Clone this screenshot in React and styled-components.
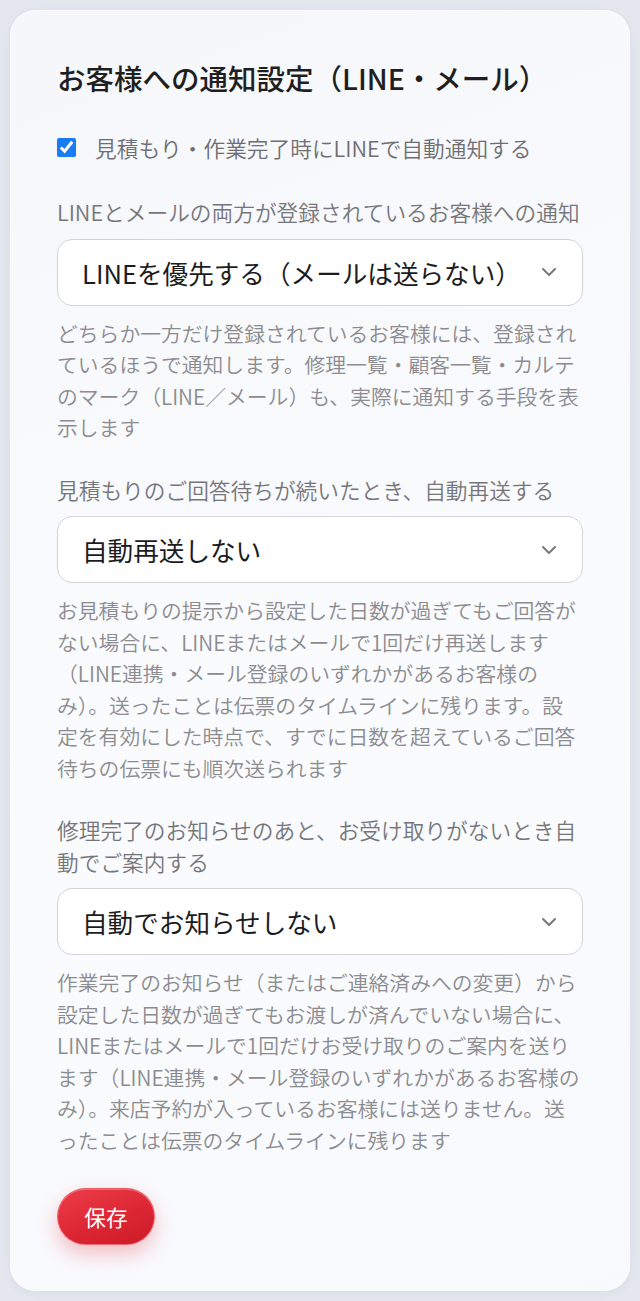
import React from 'react';
import styled, { createGlobalStyle } from 'styled-components';

const GlobalStyle = createGlobalStyle`
  html,
  body {
    margin: 0;
    padding: 0;
    background: #e4e7ee;
  }

  body {
    font-family: "Noto Sans CJK JP", "Noto Sans", sans-serif;
    -webkit-font-smoothing: antialiased;
  }
`;

const Page = styled.div`
  padding: 10px;
`;

const Card = styled.section`
  background: linear-gradient(160deg, #f6f7fa 0%, #fafbfd 55%, #f8f9fc 100%);
  border-radius: 26px;
  box-shadow: 0 2px 10px rgba(90, 100, 130, 0.08), 0 0 0 1px rgba(255, 255, 255, 0.6) inset;
  box-sizing: border-box;
  padding: 48px 47px 46px;
`;

const Title = styled.h2`
  color: #1f1f22;
  font-size: 28.5px;
  font-weight: 500;
  line-height: 39px;
  margin: 0 0 35px;
`;

const CheckRow = styled.label`
  align-items: center;
  color: #6e6e72;
  display: flex;
  font-size: 21.7px;
  font-weight: 350;
  gap: 19px;
  line-height: 31px;
  margin-bottom: 33px;

  input {
    accent-color: #1a7cf5;
    height: 19px;
    margin: 0;
    width: 19px;
  }
`;

const Field = styled.div`
  display: flex;
  flex-direction: column;

  & + & {
    margin-top: 30px;
  }
`;

const Label = styled.div`
  color: #76767a;
  font-size: 21.7px;
  font-weight: 350;
  line-height: 31.5px;
  margin-bottom: 11px;
`;

const SelectWrap = styled.div`
  position: relative;

  svg {
    pointer-events: none;
    position: absolute;
    right: 26px;
    top: 50%;
    transform: translateY(-50%);
  }
`;

const Select = styled.select`
  appearance: none;
  background: #ffffff;
  border: 1px solid #d3d3d8;
  border-radius: 15px;
  box-sizing: border-box;
  color: #1c1c1e;
  font-family: "Noto Sans CJK JP", "Noto Sans", sans-serif;
  font-size: 25.6px;
  height: 67px;
  outline: 0;
  padding: 0 60px 0 24px;
  width: 100%;
`;

const Help = styled.p`
  color: #8b8b90;
  font-size: 20.8px;
  font-weight: 350;
  line-height: 31.5px;
  margin: 12px 0 0;
`;

const SaveButton = styled.button`
  background: linear-gradient(160deg, #ec3e4a 0%, #dd2634 55%, #cc1b27 100%);
  border: 1px solid rgba(255, 140, 150, 0.55);
  border-radius: 999px;
  box-shadow: 0 9px 20px rgba(225, 40, 55, 0.28), inset 0 1px 0 rgba(255, 255, 255, 0.25);
  color: #ffffff;
  cursor: pointer;
  font-family: "Noto Sans CJK JP", "Noto Sans", sans-serif;
  font-size: 21.7px;
  height: 57px;
  margin-top: 32px;
  padding: 0;
  width: 98px;
`;

function Chevron() {
  return (
    <svg width="16" height="10" viewBox="0 0 16 10" fill="none">
      <path
        d="M2 2l6 6 6-6"
        stroke="#77777c"
        strokeWidth="2"
        strokeLinecap="round"
        strokeLinejoin="round"
      />
    </svg>
  );
}

const fields = [
  {
    label: 'LINEとメールの両方が登録されているお客様への通知',
    value: 'line',
    options: [
      { value: 'line', text: 'LINEを優先する（メールは送らない）' },
      { value: 'mail', text: 'メールを優先する（LINEは送らない）' },
      { value: 'both', text: '両方に送る' },
    ],
    help:
      'どちらか一方だけ登録されているお客様には、登録されているほうで通知します。修理一覧・顧客一覧・カルテのマーク（LINE／メール）も、実際に通知する手段を表示します',
  },
  {
    label: '見積もりのご回答待ちが続いたとき、自動再送する',
    value: 'off',
    options: [
      { value: 'off', text: '自動再送しない' },
      { value: '3', text: '3日後に再送する' },
      { value: '7', text: '7日後に再送する' },
    ],
    help:
      'お見積もりの提示から設定した日数が過ぎてもご回答がない場合に、LINEまたはメールで1回だけ再送します（LINE連携・メール登録のいずれかがあるお客様のみ）。送ったことは伝票のタイムラインに残ります。設定を有効にした時点で、すでに日数を超えているご回答待ちの伝票にも順次送られます',
  },
  {
    label: '修理完了のお知らせのあと、お受け取りがないとき自動でご案内する',
    value: 'off',
    options: [
      { value: 'off', text: '自動でお知らせしない' },
      { value: '3', text: '3日後にお知らせする' },
      { value: '7', text: '7日後にお知らせする' },
    ],
    help:
      '作業完了のお知らせ（またはご連絡済みへの変更）から設定した日数が過ぎてもお渡しが済んでいない場合に、LINEまたはメールで1回だけお受け取りのご案内を送ります（LINE連携・メール登録のいずれかがあるお客様のみ）。来店予約が入っているお客様には送りません。送ったことは伝票のタイムラインに残ります',
  },
];

export default function App() {
  return (
    <Page>
      <GlobalStyle />
      <Card>
        <Title>お客様への通知設定（LINE・メール）</Title>
        <CheckRow>
          <input type="checkbox" defaultChecked />
          見積もり・作業完了時にLINEで自動通知する
        </CheckRow>
        {fields.map((field) => (
          <Field key={field.label}>
            <Label>{field.label}</Label>
            <SelectWrap>
              <Select defaultValue={field.value}>
                {field.options.map((o) => (
                  <option key={o.value} value={o.value}>
                    {o.text}
                  </option>
                ))}
              </Select>
              <Chevron />
            </SelectWrap>
            <Help>{field.help}</Help>
          </Field>
        ))}
        <SaveButton type="button">保存</SaveButton>
      </Card>
    </Page>
  );
}
